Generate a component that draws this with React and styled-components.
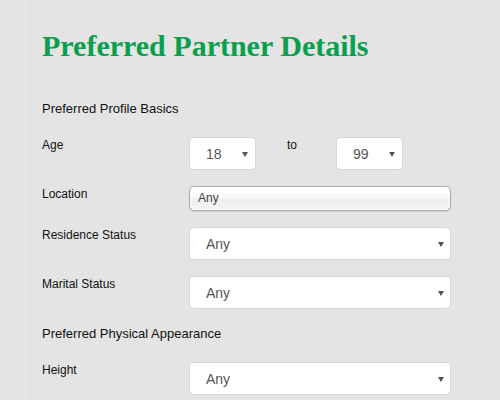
import React from 'react';
import styled, { createGlobalStyle } from 'styled-components';

const GlobalStyle = createGlobalStyle`
  html, body {
    margin: 0;
    padding: 0;
    background: #e4e4e4;
  }
  body {
    font-family: "Liberation Sans", Arial, sans-serif;
    color: #111;
  }
`;

const Page = styled.div`
  margin-left: 25px;
  border-left: 1px solid #ebebeb;
  padding: 29px 16px 20px;
  min-height: 400px;
  box-sizing: border-box;
`;

const Title = styled.h1`
  font-family: "Liberation Serif", "Times New Roman", serif;
  font-size: 30px;
  line-height: 34px;
  font-weight: bold;
  color: #0a9f4f;
  margin: 0 0 37px;
`;

const SectionHeading = styled.h3`
  font-size: 13px;
  line-height: 18px;
  font-weight: normal;
  color: #111;
  margin: 0 0 19px;
`;

const Row = styled.div`
  display: grid;
  grid-template-columns: 147px 262px;
  align-items: start;
  margin-bottom: 16px;
`;

const Label = styled.label`
  font-size: 12px;
  line-height: 16px;
  color: #111;
`;

const AgeRange = styled.div`
  display: flex;
  align-items: flex-start;
`;

const ToLabel = styled.span`
  width: 80px;
  padding-left: 31px;
  box-sizing: border-box;
  font-size: 12px;
  line-height: 16px;
  color: #111;
`;

const SelectWrap = styled.div`
  position: relative;
  width: ${(p) => p.$width || '262px'};

  &::after {
    content: '';
    position: absolute;
    top: 15px;
    right: ${(p) => (p.$small ? '8px' : '7px')};
    border-left: 3px solid transparent;
    border-right: 3px solid transparent;
    border-top: 5px solid #555;
    pointer-events: none;
  }
`;

const Select = styled.select`
  appearance: none;
  -webkit-appearance: none;
  display: block;
  width: 100%;
  height: 33px;
  box-sizing: border-box;
  padding: 0 16px;
  border: 1px solid #d6d6d6;
  border-radius: 4px;
  background: #fff;
  font-family: "Liberation Sans", Arial, sans-serif;
  font-size: 14px;
  color: #555;
  outline: none;
`;

const ChosenSingle = styled.div`
  height: 25px;
  box-sizing: border-box;
  padding: 0 0 0 8px;
  border: 1px solid #aaa;
  border-radius: 5px;
  background: linear-gradient(#fff 20%, #f6f6f6 50%, #eee 52%, #f4f4f4 100%);
  box-shadow: 0 0 3px #fff inset, 0 1px 1px rgba(0, 0, 0, 0.1);
  font-size: 12px;
  line-height: 23px;
  color: #444;
  white-space: nowrap;
`;

const ages = Array.from({ length: 82 }, (_, i) => 18 + i);

const AnySelect = () => (
  <SelectWrap>
    <Select defaultValue="Any">
      <option>Any</option>
    </Select>
  </SelectWrap>
);

const App = () => {
  return (
    <>
      <GlobalStyle />
      <Page>
        <Title>Preferred Partner Details</Title>

        <SectionHeading>Preferred Profile Basics</SectionHeading>

        <Row>
          <Label>Age</Label>
          <AgeRange>
            <SelectWrap $width="67px" $small>
              <Select defaultValue="18">
                {ages.map((a) => <option key={a}>{a}</option>)}
              </Select>
            </SelectWrap>
            <ToLabel>to</ToLabel>
            <SelectWrap $width="67px" $small>
              <Select defaultValue="99">
                {ages.map((a) => <option key={a}>{a}</option>)}
              </Select>
            </SelectWrap>
          </AgeRange>
        </Row>

        <Row>
          <Label>Location</Label>
          <ChosenSingle>Any</ChosenSingle>
        </Row>

        <Row>
          <Label>Residence Status</Label>
          <AnySelect />
        </Row>

        <Row>
          <Label>Marital Status</Label>
          <AnySelect />
        </Row>

        <SectionHeading>Preferred Physical Appearance</SectionHeading>

        <Row>
          <Label>Height</Label>
          <AnySelect />
        </Row>
      </Page>
    </>
  );
};

export default App;
